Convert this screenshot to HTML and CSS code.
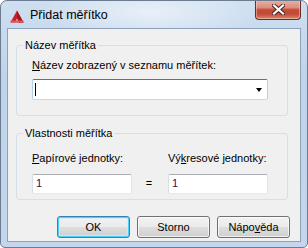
FILE: index.html
```html
<!DOCTYPE html>
<html lang="cs">
<head>
<meta charset="utf-8">
<title>Přidat měřítko</title>
<link rel="stylesheet" href="styles.css">
</head>
<body>
<div class="window">
  <div class="titlebar">
    <svg class="app-icon" width="16" height="16" viewBox="0 0 16 16">
      <path d="M8 1.5 L14.5 13.5 L1.5 13.5 Z" fill="#c8202a"/>
      <path d="M8 1.5 L14.5 13.5 L8 13.5 Z" fill="#a8141c"/>
      <path d="M6.2 13.5 L8 9.6 L9.8 13.5 Z" fill="#f4d8d8"/>
      <rect x="1.5" y="11.5" width="13" height="2" fill="#e0555c"/>
    </svg>
    <span class="title">Přidat měřítko</span>
    <div class="close-btn">
      <svg width="13" height="11" viewBox="0 0 13 11">
        <path d="M2 1.5 L11 9.5 M11 1.5 L2 9.5" stroke="#4a2020" stroke-width="4" stroke-linecap="square"/>
        <path d="M2 1.5 L11 9.5 M11 1.5 L2 9.5" stroke="#ffffff" stroke-width="2.2" stroke-linecap="square"/>
      </svg>
    </div>
  </div>
  <div class="client">
    <fieldset class="group group-name">
      <legend class="group-title">Název měřítka</legend>
      <div class="label"><u>N</u>ázev zobrazený v seznamu měřítek:</div>
      <div class="combo">
        <span class="caret"></span>
        <span class="arrow"></span>
      </div>
    </fieldset>
    <fieldset class="group group-props">
      <legend class="group-title">Vlastnosti měřítka</legend>
      <div class="props-grid">
        <div class="label"><u>P</u>apírové jednotky:</div>
        <div></div>
        <div class="label">Vý<u>k</u>resové jednotky:</div>
        <div class="textbox">1</div>
        <div class="equals">=</div>
        <div class="textbox">1</div>
      </div>
    </fieldset>
    <div class="buttons">
      <div class="btn btn-default">OK</div>
      <div class="btn">Storno</div>
      <div class="btn">Nápo<u>v</u>ěda</div>
    </div>
  </div>
</div>
</body>
</html>
```

FILE: styles.css
```css
html, body {
  margin: 0;
  padding: 0;
  background: #ffffff;
}

body {
  font-family: "Liberation Sans", Arial, sans-serif;
  font-size: 11px;
  color: #000;
}

.window {
  box-sizing: border-box;
  width: 308px;
  height: 248px;
  border: 1px solid #6c7c90;
  border-radius: 7px 7px 5px 5px;
  background:
    radial-gradient(ellipse 110px 30px at 150px 12px, rgba(255,255,255,0.55), rgba(255,255,255,0) 100%),
    linear-gradient(180deg, #cfdff1 0%, #bfd3ea 30%, #c3d6ec 100%);
  display: flex;
  flex-direction: column;
  overflow: hidden;
}

.titlebar {
  height: 27px;
  display: flex;
  align-items: flex-start;
  padding-left: 8px;
}

.app-icon {
  margin-top: 8px;
  flex: none;
}

.title {
  margin-left: 5px;
  margin-top: 7px;
  font-size: 12.5px;
  line-height: 15px;
  color: #000;
}

.close-btn {
  margin-left: auto;
  margin-right: 6px;
  margin-top: -1px;
  width: 46px;
  height: 20px;
  box-sizing: border-box;
  border: 1px solid #6d2b25;
  border-top: none;
  border-radius: 0 0 4px 4px;
  background: linear-gradient(180deg, #e9b2a6 0%, #dc8e7d 40%, #c24a36 52%, #c34c38 75%, #d98a6c 100%);
  box-shadow: inset 0 0 0 1px rgba(255,220,210,0.45);
  display: flex;
  align-items: center;
  justify-content: center;
}

.client {
  flex: 1;
  margin: 0 6px 5px 6px;
  border: 1px solid #8da2ba;
  background: #f0f0f0;
  display: flex;
  flex-direction: column;
  padding-left: 8px;
  padding-right: 10px;
}

.group {
  box-sizing: border-box;
  width: 272px;
  margin: 0;
  border: 1px solid #d5dfe5;
  border-radius: 3px;
  padding: 0 15px;
  min-width: 0;
}

.group-name {
  margin-top: 10px;
  padding-bottom: 15px;
}

.group-props {
  margin-top: 11px;
  padding-bottom: 5px;
}

.group-title {
  margin-left: -9px;
  padding: 0 2px;
  line-height: 13px;
}

.label {
  line-height: 13px;
  white-space: nowrap;
}

.group-name .label {
  margin-top: 7px;
  margin-bottom: 7px;
}

.combo {
  box-sizing: border-box;
  width: 236px;
  height: 21px;
  background: #fff;
  border: 1px solid;
  border-color: #3d7bad #b5cfe7 #c6daec #b5cfe7;
  border-radius: 2px;
  display: flex;
  align-items: center;
  padding-left: 2px;
  padding-right: 4px;
}

.caret {
  width: 1px;
  height: 13px;
  background: #000;
}

.arrow {
  margin-left: auto;
  width: 0;
  height: 0;
  border-left: 3.5px solid transparent;
  border-right: 3.5px solid transparent;
  border-top: 4px solid #000;
  margin-right: 1px;
}

.props-grid {
  display: grid;
  grid-template-columns: 100px 36px 100px;
  grid-template-rows: 13px 20px;
  row-gap: 9px;
  margin-top: 12px;
}

.textbox {
  box-sizing: border-box;
  height: 20px;
  background: #fff;
  border: 1px solid;
  border-color: #abadb3 #e2e3ea #e3e9ef #dbdfe6;
  border-radius: 2px;
  padding-left: 3px;
  line-height: 17px;
  color: #3c0a58;
  font-size: 11px;
}

.equals {
  text-align: center;
  line-height: 18px;
  padding-right: 2px;
}

.buttons {
  display: flex;
  justify-content: flex-end;
  gap: 7px;
  margin-top: 16px;
}

.btn {
  box-sizing: border-box;
  width: 73px;
  height: 22px;
  border: 1px solid #707070;
  border-radius: 3px;
  background: linear-gradient(180deg, #f2f2f2 0%, #ebebeb 48%, #dddddd 52%, #cfcfcf 100%);
  box-shadow: inset 0 0 0 1px rgba(255,255,255,0.7);
  display: flex;
  align-items: center;
  justify-content: center;
  font-size: 11px;
  color: #000;
}

.btn-default {
  border-color: #3c7fb1;
  box-shadow: inset 0 0 0 1px #48d2fb, inset 0 0 0 2px rgba(200,240,255,0.6);
}

u {
  text-decoration: underline;
  text-underline-offset: 1px;
}
```
